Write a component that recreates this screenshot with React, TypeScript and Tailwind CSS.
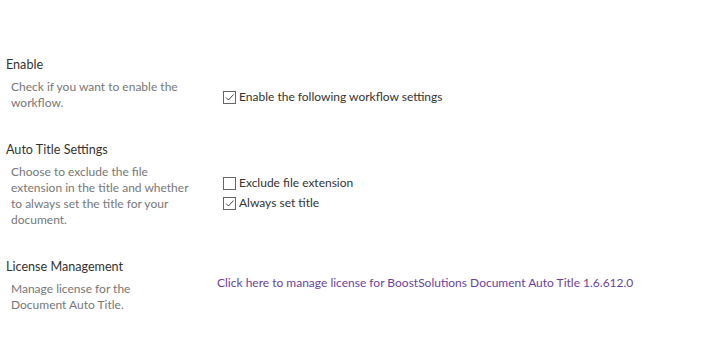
import React from "react";

function Box({ checked }: { checked: boolean }) {
  return (
    <span className="inline-flex w-[13px] h-[13px] border border-[#666] bg-white items-center justify-center mr-[3px] shrink-0">
      {checked && (
        <svg width="11" height="11" viewBox="0 0 11 11">
          <path d="M2 5.5 L4.5 8 L9.5 2.5" fill="none" stroke="#444" strokeWidth="1" />
        </svg>
      )}
    </span>
  );
}

function Section({ title, desc, children, descW = "w-[182px]" }: { title: string; desc: string; children: React.ReactNode; descW?: string }) {
  return (
    <div className="flex">
      <div className="w-[217px] shrink-0">
        <div className="text-[12.6px] text-[#333] leading-[18px] pl-[6px] pt-[1px]">{title}</div>
        <div className={`text-[12px] text-[#777] leading-[16px] ml-[11px] mt-[5px] ${descW}`}>{desc}</div>
      </div>
      {children}
    </div>
  );
}

export default function App() {
  return (
    <div className="w-[705px] h-[364px] bg-white" style={{ fontFamily: 'Lato, "Open Sans", sans-serif' }}>
      <div className="pt-[55px]">
        <Section title="Enable" desc="Check if you want to enable the workflow.">
          <div className="pt-[34px] pl-[6px]">
            <label className="flex items-center text-[12px] text-[#333] leading-[16px]">
              <Box checked={true} />
              Enable the following workflow settings
            </label>
          </div>
        </Section>
        <div className="h-[29px]" />
        <Section title="Auto Title Settings" desc="Choose to exclude the file extension in the title and whether to always set the title for your document.">
          <div className="pt-[35px] pl-[6px] flex flex-col gap-[4px]">
            <label className="flex items-center text-[12px] text-[#333] leading-[16px]">
              <Box checked={false} />
              Exclude file extension
            </label>
            <label className="flex items-center text-[12px] text-[#333] leading-[16px]">
              <Box checked={true} />
              Always set title
            </label>
          </div>
        </Section>
        <div className="h-[29px]" />
        <Section title="License Management" desc="Manage license for the Document Auto Title." descW="w-[150px]">
          <div className="pt-[18px]">
            <a className="text-[12px] text-[#6b3fa0] leading-[16px] block">
              Click here to manage license for BoostSolutions Document Auto Title 1.6.612.0
            </a>
          </div>
        </Section>
      </div>
    </div>
  );
}
